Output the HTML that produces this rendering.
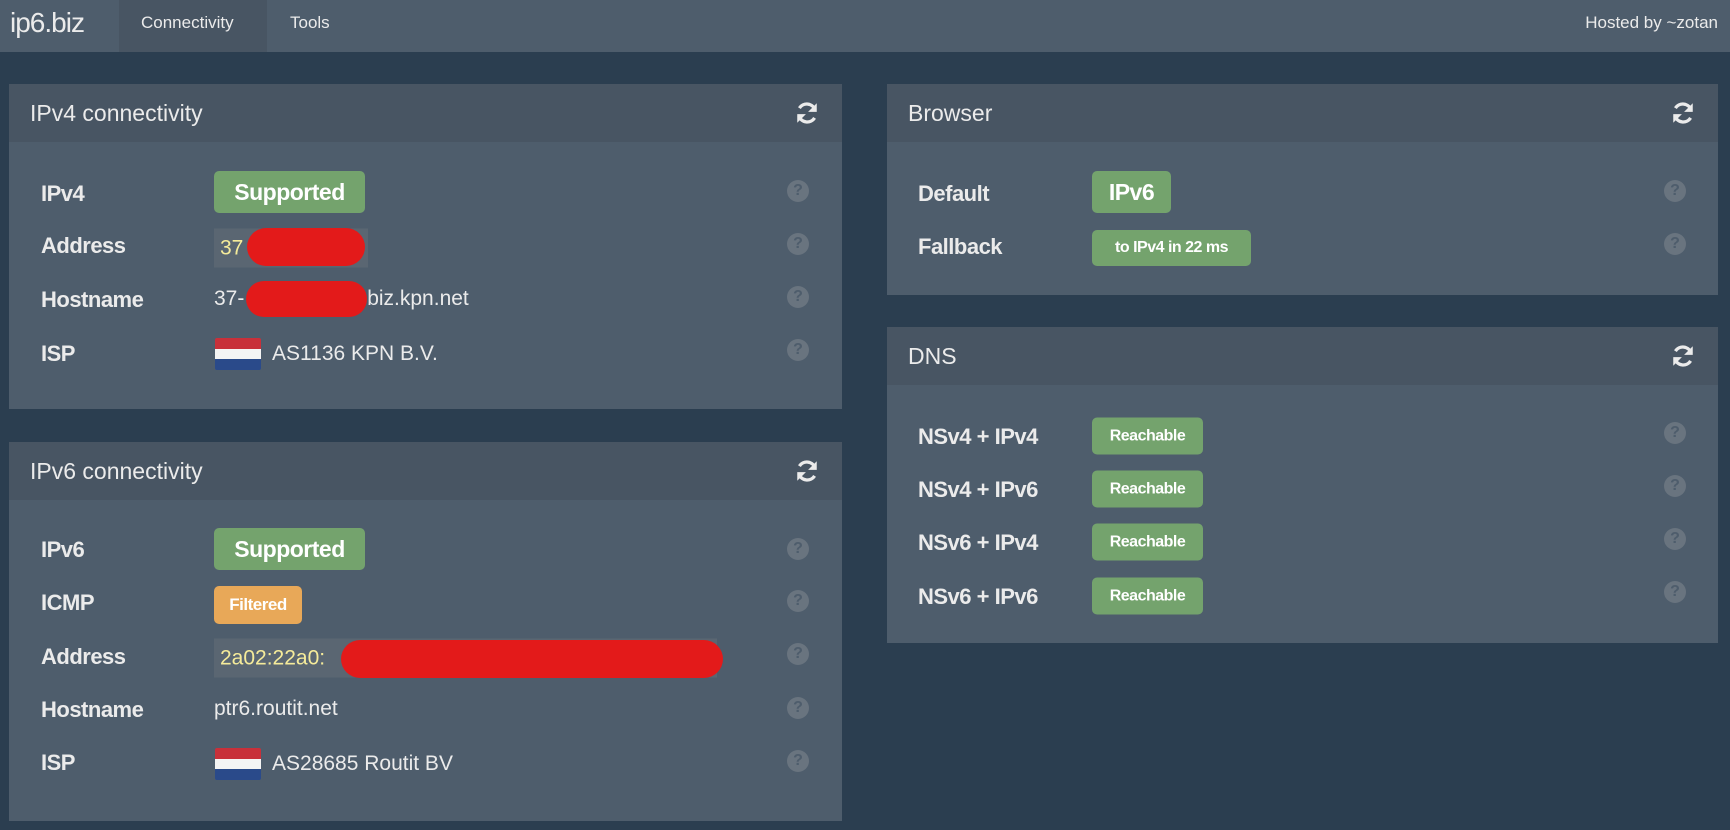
<!DOCTYPE html>
<html><head><meta charset="utf-8"><style>
*{margin:0;padding:0;box-sizing:border-box}
body{width:1730px;height:830px;background:#2b3e50;font-family:"Liberation Sans",sans-serif;color:#ebebeb;position:relative;overflow:hidden}
.nav{position:absolute;left:0;top:0;width:1730px;height:52px;background:#4e5d6c}
.nav .brand{position:absolute;left:10px;top:7px;font-size:28px;color:#ebebeb;letter-spacing:-1px}
.nav .act{position:absolute;left:119px;top:0;width:148px;height:52px;background:#485563}
.nav .t{position:absolute;top:13px;font-size:17px;color:#ebebeb}
.panel{position:absolute;background:#4e5d6c}
.ph{position:absolute;left:0;top:0;right:0;height:58px;background:#485563}
.ph .title{position:absolute;left:21px;top:16px;font-size:23px}
.ph svg{position:absolute;right:22px;top:16px}
.lbl{position:absolute;font-weight:bold;font-size:22px;transform:translateY(-50%);letter-spacing:-0.5px}
.val{position:absolute;font-size:21px;transform:translateY(-50%)}
.badge{position:absolute;background:#74a36d;color:#fff;font-weight:bold;border-radius:5px;text-align:center;transform:translateY(-50%);letter-spacing:-0.5px}
.q{position:absolute;width:22px;height:22px;border-radius:50%;background:#69747f;color:#4e5d6c;font-weight:bold;font-size:16px;text-align:center;line-height:22px;transform:translateY(-50%)}
.code{position:absolute;background:#5a6672;color:#f5eb9a;font-size:21px;transform:translateY(-50%);padding-left:6px;line-height:39px}
.red{position:absolute;background:#e31a1a;border-radius:20px}
.flag{position:absolute;width:46px;height:32px;transform:translateY(-50%);border-radius:2px;overflow:hidden}
.flag div{height:33.3%}
</style></head><body>
<div class="nav">
<div class="brand">ip6.biz</div>
<div class="act"></div>
<div class="t" style="left:141px">Connectivity</div>
<div class="t" style="left:290px">Tools</div>
<div class="t" style="right:12px">Hosted by ~zotan</div>
</div>

<svg width="0" height="0" style="position:absolute"><defs><symbol id="r" viewBox="0 0 24 24"><path d="M19.5 9.5A8 8 0 0 0 5 7.5M4.5 14.5A8 8 0 0 0 19 16.5" fill="none" stroke="#ebebeb" stroke-width="3"/><path d="M21 3v8h-8z M3 21v-8h8z" fill="#ebebeb"/></symbol></defs></svg>

<div class="panel" style="left:9px;top:84px;width:833px;height:325px">
<div class="ph"><div class="title">IPv4 connectivity</div><svg width="26" height="26"><use href="#r"/></svg></div>
</div>
<div class="lbl" style="left:41px;top:194px">IPv4</div>
<div class="badge" style="left:214px;top:192px;width:151px;height:42px;font-size:23px;line-height:42px">Supported</div>
<div class="lbl" style="left:41px;top:246px">Address</div>
<div class="code" style="left:214px;top:248px;width:154px;height:39px">37</div>
<div class="red" style="left:247px;top:228px;width:118px;height:38px"></div>
<div class="lbl" style="left:41px;top:300px">Hostname</div>
<div class="val" style="left:214px;top:299px">37-<span style="display:inline-block;width:117px"></span>.biz.kpn.net</div>
<div class="red" style="left:246px;top:281px;width:121px;height:36px"></div>
<div class="lbl" style="left:41px;top:354px">ISP</div>
<div class="flag" style="left:215px;top:354px"><div style="background:#c8303a"></div><div style="background:#f4f4f4"></div><div style="background:#2a4a8a"></div></div>
<div class="val" style="left:272px;top:354px">AS1136 KPN B.V.</div>
<div class="q" style="left:787px;top:191px">?</div>
<div class="q" style="left:787px;top:244px">?</div>
<div class="q" style="left:787px;top:297px">?</div>
<div class="q" style="left:787px;top:350px">?</div>

<div class="panel" style="left:9px;top:442px;width:833px;height:379px">
<div class="ph"><div class="title">IPv6 connectivity</div><svg width="26" height="26"><use href="#r"/></svg></div>
</div>
<div class="lbl" style="left:41px;top:550px">IPv6</div>
<div class="badge" style="left:214px;top:549px;width:151px;height:42px;font-size:23px;line-height:42px">Supported</div>
<div class="lbl" style="left:41px;top:603px">ICMP</div>
<div class="badge" style="left:214px;top:605px;width:88px;height:38px;font-size:17px;line-height:38px;background:#e8a858">Filtered</div>
<div class="lbl" style="left:41px;top:657px">Address</div>
<div class="code" style="left:214px;top:658px;width:503px;height:39px">2a02:22a0:</div>
<div class="red" style="left:341px;top:640px;width:382px;height:38px"></div>
<div class="lbl" style="left:41px;top:710px">Hostname</div>
<div class="val" style="left:214px;top:709px">ptr6.routit.net</div>
<div class="lbl" style="left:41px;top:763px">ISP</div>
<div class="flag" style="left:215px;top:764px"><div style="background:#c8303a"></div><div style="background:#f4f4f4"></div><div style="background:#2a4a8a"></div></div>
<div class="val" style="left:272px;top:764px">AS28685 Routit BV</div>
<div class="q" style="left:787px;top:549px">?</div>
<div class="q" style="left:787px;top:601px">?</div>
<div class="q" style="left:787px;top:654px">?</div>
<div class="q" style="left:787px;top:708px">?</div>
<div class="q" style="left:787px;top:761px">?</div>

<div class="panel" style="left:887px;top:84px;width:831px;height:211px">
<div class="ph"><div class="title">Browser</div><svg width="26" height="26"><use href="#r"/></svg></div>
</div>
<div class="lbl" style="left:918px;top:194px">Default</div>
<div class="badge" style="left:1092px;top:192px;width:79px;height:42px;font-size:23px;line-height:42px">IPv6</div>
<div class="lbl" style="left:918px;top:247px">Fallback</div>
<div class="badge" style="left:1092px;top:248px;width:159px;height:36px;font-size:16px;line-height:36px">to IPv4 in 22 ms</div>
<div class="q" style="left:1664px;top:191px">?</div>
<div class="q" style="left:1664px;top:244px">?</div>

<div class="panel" style="left:887px;top:327px;width:831px;height:316px">
<div class="ph"><div class="title">DNS</div><svg width="26" height="26"><use href="#r"/></svg></div>
</div>
<div class="lbl" style="left:918px;top:437px">NSv4 + IPv4</div>
<div class="lbl" style="left:918px;top:490px">NSv4 + IPv6</div>
<div class="lbl" style="left:918px;top:543px">NSv6 + IPv4</div>
<div class="lbl" style="left:918px;top:597px">NSv6 + IPv6</div>
<div class="badge" style="left:1092px;top:436px;width:111px;height:37px;font-size:16px;line-height:37px">Reachable</div>
<div class="badge" style="left:1092px;top:489px;width:111px;height:37px;font-size:16px;line-height:37px">Reachable</div>
<div class="badge" style="left:1092px;top:542px;width:111px;height:37px;font-size:16px;line-height:37px">Reachable</div>
<div class="badge" style="left:1092px;top:596px;width:111px;height:37px;font-size:16px;line-height:37px">Reachable</div>
<div class="q" style="left:1664px;top:433px">?</div>
<div class="q" style="left:1664px;top:486px">?</div>
<div class="q" style="left:1664px;top:539px">?</div>
<div class="q" style="left:1664px;top:592px">?</div>
</body></html>
